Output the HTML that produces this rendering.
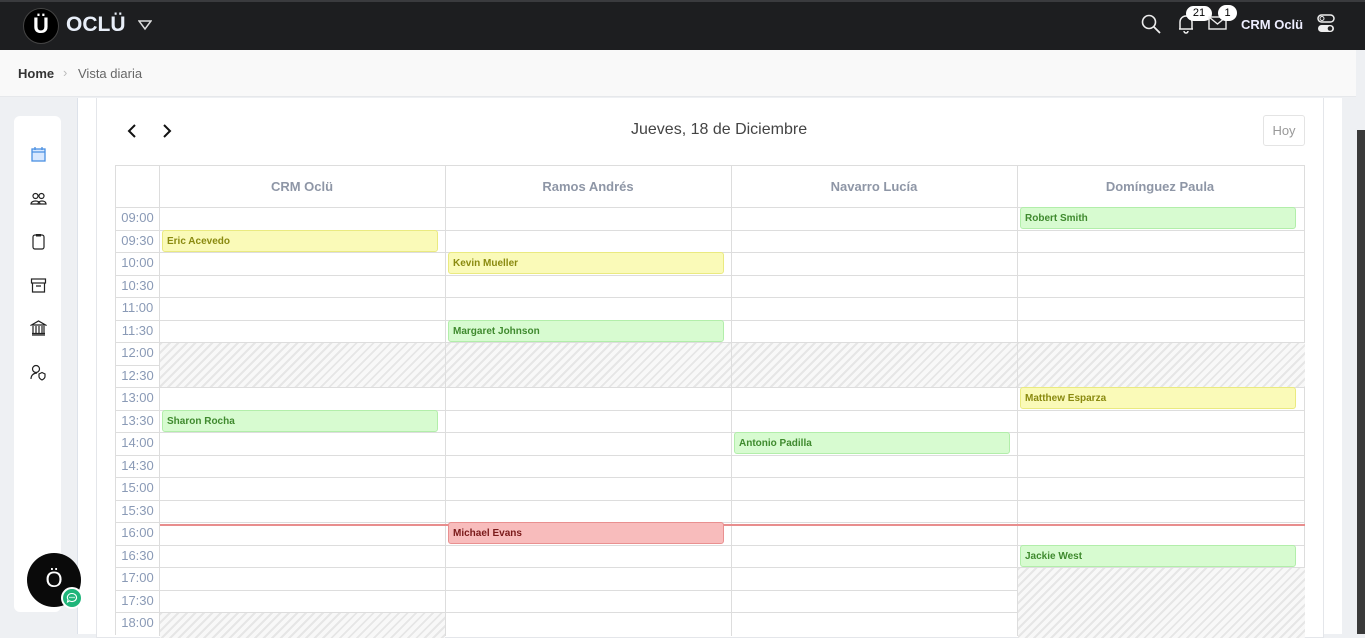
<!DOCTYPE html>
<html><head><meta charset="utf-8"><style>
*{box-sizing:border-box;margin:0;padding:0}
body{width:1365px;height:634px;overflow:hidden;background:#eef0f3;font-family:"Liberation Sans",sans-serif;position:relative}
.top{position:absolute;left:0;top:0;width:1365px;height:50px;background:#1d1e20;border-top:2px solid #3a3b3e}
.bc{position:absolute;left:0;top:50px;width:1356px;height:47px;background:#f9f9f9;border-bottom:1px solid #e6e8eb;font-size:13px;color:#555}
.side{position:absolute;left:14px;top:116px;width:47px;height:496px;background:#fff;border-radius:6px}
.panel{position:absolute;left:77px;top:98px;width:1265px;height:536px;background:#fff;border-left:1px solid #dde2ea}
.card{position:absolute;left:96px;top:98px;width:1228px;height:540px;border:1px solid #e4e6ea;border-top:none;background:#fff}
.g{position:absolute;left:115px;top:165px;width:1190px;height:470px;border:1px solid #ddd;border-bottom:none}
.hl{position:absolute;height:1px;background:#ddd}
.vl{position:absolute;width:1px;background:#ddd}
.t{position:absolute;left:0;width:43px;text-align:center;font-size:13px;color:#8a9ab6}
.h{position:absolute;top:0;height:41px;line-height:41px;text-align:center;font-size:13px;font-weight:bold;color:#8e96a6;width:286px}
.hat{position:absolute;background:repeating-linear-gradient(135deg,#e6e6e6 0 2px,#f8f8f8 2px 6px)}
.ev{position:absolute;height:22px;border-radius:3px;font-size:10px;font-weight:bold;padding-left:4px;line-height:21px}
.y{background:#fafab8;border:1px solid #eaea80;color:#8a8a10}
.gr{background:#d7fbd0;border:1px solid #b2eeaa;color:#3f8a2e}
.r{background:#f8bcbc;border:1px solid #e99090;color:#7a1a1a}
.ic{position:absolute;left:30px;width:17px;height:17px}
</style></head><body>
<div class="top">
 <div style="position:absolute;left:23px;top:6px;width:36px;height:36px;border-radius:50%;background:#000;border:1px solid #444;color:#fff;font-size:22px;font-weight:bold;text-align:center;line-height:34px">Ü</div>
 <div style="position:absolute;left:66px;top:11px;color:#e8eef8;font-size:21px;font-weight:bold">OCLÜ</div>
 <svg style="position:absolute;left:138px;top:17px" width="14" height="12"><path d="M1 2H13L7 10Z" fill="none" stroke="#ddd" stroke-width="1.5"/></svg>
 <svg style="position:absolute;left:1141px;top:12px" width="20" height="20"><circle cx="8" cy="8" r="6.5" fill="none" stroke="#eee" stroke-width="1.6"/><path d="M13 13L19 19" stroke="#eee" stroke-width="1.8"/></svg>
 <svg style="position:absolute;left:1177px;top:12px" width="18" height="20"><path d="M3 15V8a6 6 0 0 1 12 0v7H2h14M7 17a2 2 0 0 0 4 0" fill="none" stroke="#eee" stroke-width="1.5"/></svg>
 <div style="position:absolute;left:1186px;top:4px;width:26px;height:15px;border-radius:8px;background:#fff;color:#000;font-size:11px;text-align:center;line-height:15px">21</div>
 <svg style="position:absolute;left:1208px;top:14px" width="20" height="15"><rect x="1" y="1" width="17" height="12" fill="none" stroke="#eee" stroke-width="1.4"/><path d="M1 1L9.5 8 18 1" fill="none" stroke="#eee" stroke-width="1.4"/></svg>
 <div style="position:absolute;left:1218px;top:3px;width:19px;height:16px;border-radius:8px;background:#fff;color:#000;font-size:11px;text-align:center;line-height:16px">1</div>
 <div style="position:absolute;left:1241px;top:15px;color:#eef;font-size:13px;font-weight:bold">CRM Oclü</div>
 <svg style="position:absolute;left:1317px;top:12px" width="18" height="20"><rect x="1" y="1" width="16" height="7" rx="3.5" fill="none" stroke="#eee" stroke-width="1.5"/><circle cx="5" cy="4.5" r="2" fill="none" stroke="#eee"/><rect x="1" y="11" width="16" height="7" rx="3.5" fill="#eee"/><circle cx="13" cy="14.5" r="2.3" fill="#222"/></svg>
</div>
<div class="bc"><span style="position:absolute;left:18px;top:16px;font-weight:bold;color:#333">Home</span><span style="position:absolute;left:63px;top:15px;color:#bbb">›</span><span style="position:absolute;left:78px;top:16px;color:#666">Vista diaria</span></div>
<div style="position:absolute;left:1357px;top:130px;width:8px;height:504px;background:#3a3a3a"></div>
<div class="side">
 <svg class="ic" style="left:16px;top:30px" width="17" height="17"><rect x="2" y="3" width="13" height="12" fill="#d8e8ff" stroke="#4a90e2" stroke-width="1.3"/><path d="M2 6H15M5 1V4M12 1V4" stroke="#4a90e2" stroke-width="1.3"/></svg>
 <svg class="ic" style="left:16px;top:74px" width="17" height="17"><circle cx="5.5" cy="6" r="2.5" fill="none" stroke="#222" stroke-width="1.2"/><circle cx="11.5" cy="6" r="2.5" fill="none" stroke="#222" stroke-width="1.2"/><path d="M1 14c0-4 9-4 9 0zM8 14c0-4 8-4 8 0z" fill="none" stroke="#222" stroke-width="1.2"/></svg>
 <svg class="ic" style="left:16px;top:117px" width="17" height="17"><rect x="3" y="2" width="11" height="14" rx="2" fill="none" stroke="#222" stroke-width="1.2"/><rect x="6" y="1" width="5" height="2.5" fill="#222"/></svg>
 <svg class="ic" style="left:16px;top:161px" width="17" height="17"><rect x="1.5" y="2" width="14" height="4" fill="none" stroke="#222" stroke-width="1.2"/><path d="M2.5 6V15H14.5V6M6 9H11" fill="none" stroke="#222" stroke-width="1.2"/></svg>
 <svg class="ic" style="left:16px;top:204px" width="17" height="17"><path d="M1.5 5L8.5 1 15.5 5ZM2 15H15M3 6V13M6 6V13M9 6V13M12 6V13M14 6V13M2 13.5H15" fill="none" stroke="#222" stroke-width="1.2"/></svg>
 <svg class="ic" style="left:16px;top:248px" width="17" height="17"><circle cx="6" cy="5" r="3.5" fill="none" stroke="#222" stroke-width="1.2"/><path d="M1 15c0-4 3-6 6-6M9 10l3-1.5 3 1.5v2.5c0 2-3 3.5-3 3.5s-3-1.5-3-3.5z" fill="none" stroke="#222" stroke-width="1.2"/></svg>
</div>
<div class="panel"></div>
<div class="card"></div>
<svg style="position:absolute;left:127px;top:124px" width="10" height="14"><path d="M8 1L2 7 8 13" fill="none" stroke="#111" stroke-width="2"/></svg>
<svg style="position:absolute;left:162px;top:124px" width="10" height="14"><path d="M2 1L8 7 2 13" fill="none" stroke="#111" stroke-width="2"/></svg>
<div style="position:absolute;left:631px;top:121px;font-size:16px;color:#444">Jueves, 18 de Diciembre</div>
<div style="position:absolute;left:1263px;top:115px;width:42px;height:31px;border:1px solid #e4e4e4;border-radius:3px;font-size:13px;color:#999;text-align:center;line-height:30px">Hoy</div>
<div class="g">
 <div id="rows"></div>
 <div class="hat" style="left:44px;top:177px;width:1145px;height:44px"></div>
 <div class="hat" style="left:902px;top:402px;width:287px;height:70px"></div>
 <div class="hat" style="left:44px;top:447px;width:285px;height:25px"></div>
 <div class="vl" style="left:43px;top:0;height:470px"></div>
 <div class="vl" style="left:329px;top:0;height:470px"></div>
 <div class="vl" style="left:615px;top:0;height:470px"></div>
 <div class="vl" style="left:901px;top:0;height:470px"></div>
 <div class="h" style="left:43px">CRM Oclü</div>
 <div class="h" style="left:329px">Ramos Andrés</div>
 <div class="h" style="left:615px">Navarro Lucía</div>
 <div class="h" style="left:901px">Domínguez Paula</div>
 <div style="position:absolute;left:44px;top:358px;width:1145px;height:2px;background:#e88d8d"></div>
 <div class="ev gr" style="left:904px;top:41px;width:276px">Robert Smith</div>
 <div class="ev y" style="left:46px;top:64px;width:276px">Eric Acevedo</div>
 <div class="ev y" style="left:332px;top:86px;width:276px">Kevin Mueller</div>
 <div class="ev gr" style="left:332px;top:154px;width:276px">Margaret Johnson</div>
 <div class="ev y" style="left:904px;top:221px;width:276px">Matthew Esparza</div>
 <div class="ev gr" style="left:46px;top:244px;width:276px">Sharon Rocha</div>
 <div class="ev gr" style="left:618px;top:266px;width:276px">Antonio Padilla</div>
 <div class="ev r" style="left:332px;top:356px;width:276px">Michael Evans</div>
 <div class="ev gr" style="left:904px;top:379px;width:276px">Jackie West</div>
</div>
<script>
var t=["09:00","09:30","10:00","10:30","11:00","11:30","12:00","12:30","13:00","13:30","14:00","14:30","15:00","15:30","16:00","16:30","17:00","17:30","18:00"],h="";
for(var i=0;i<19;i++){var y=41+i*22.5;h+='<div class="hl" style="left:0;top:'+y+'px;width:1189px"></div><div class="t" style="top:'+(y+3)+'px">'+t[i]+'</div>';}
document.getElementById("rows").outerHTML=h;
</script>
<div style="position:absolute;left:27px;top:553px;width:54px;height:54px;border-radius:50%;background:#0a0a0a;color:#fff;font-size:22px;text-align:center;line-height:54px">Ö</div>
<div style="position:absolute;left:61px;top:587px;width:22px;height:22px;border-radius:50%;background:#1fb57a;border:2px solid #fff"><svg width="18" height="18" style="position:absolute;left:0;top:0"><path d="M9 4.5a4.5 4 0 1 1-2.5 7.3L4.5 13 5 10.5A4.5 4 0 0 1 9 4.5z" fill="none" stroke="#fff" stroke-width="1.1"/><circle cx="7" cy="8.5" r=".7" fill="#fff"/><circle cx="9" cy="8.5" r=".7" fill="#fff"/><circle cx="11" cy="8.5" r=".7" fill="#fff"/></svg></div>
</body></html>
